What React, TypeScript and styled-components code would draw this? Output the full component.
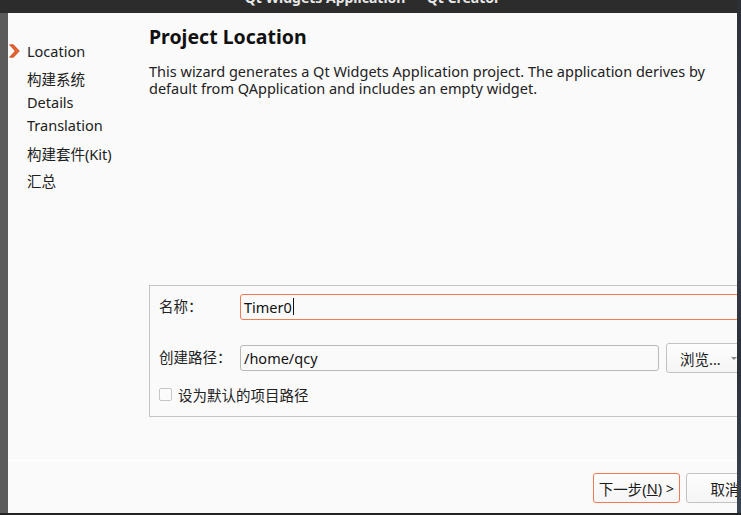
import React from "react";
import styled, { createGlobalStyle } from "styled-components";

const Global = createGlobalStyle`
  html, body { margin: 0; padding: 0; }
  body {
    width: 741px; height: 515px; overflow: hidden;
    background: #1e1f22;
    font-family: "Noto Sans", "Noto Sans CJK SC", sans-serif;
    font-size: 14.5px;
    color: #1a1a1a;
  }
`;

const Screen = styled.div`
  display: flex;
  flex-direction: column;
  width: 741px;
  height: 515px;
`;

const Upper = styled.div`
  display: flex;
  height: 513px;
`;

const MainCol = styled.div`
  width: 737px;
  display: flex;
  flex-direction: column;
`;

const TitleBar = styled.div`
  height: 13px;
  background: #2c2c2c;
  overflow: hidden;
  display: flex;
  justify-content: center;
  align-items: flex-start;
`;

const TitleText = styled.div`
  margin-top: -9px;
  margin-left: 8px;
  font-family: "Noto Sans", "DejaVu Sans", sans-serif;
  font-weight: 700;
  font-size: 14px;
  line-height: 14px;
  color: #e6e6e6;
  white-space: nowrap;
`;

const BodyRow = styled.div`
  flex: 1;
  display: flex;
  min-height: 0;
`;

const LeftStrip = styled.div`
  width: 8px;
  background: #5b5b5b;
`;

const RightStrip = styled.div`
  width: 4px;
  background: linear-gradient(180deg, #2b2f36 0%, #3a4350 40%, #2a3038 70%, #3b4552 100%);
`;

const BottomStrip = styled.div`
  height: 2px;
  background: #222;
`;

const Window = styled.div`
  width: 729px;
  background: #fafafa;
  display: flex;
  flex-direction: column;
  overflow: hidden;
`;

const Top = styled.div`
  height: 447px;
  display: flex;
`;

const Nav = styled.div`
  width: 141px;
  flex-shrink: 0;
  padding-top: 26px;
  display: flex;
  flex-direction: column;
`;

const NavItem = styled.div<{ $h: number }>`
  height: ${(p) => p.$h}px;
  display: flex;
  align-items: center;
  white-space: nowrap;
  color: #202020;
`;

const ArrowSlot = styled.div`
  width: 18px;
  padding-left: 1px;
  display: flex;
  align-items: center;
`;

const Content = styled.div`
  flex: 1;
  display: flex;
  flex-direction: column;
  padding-top: 11px;
  padding-bottom: 43px;
  min-width: 0;
`;

const Title = styled.div`
  font-weight: 700;
  font-size: 19.5px;
  line-height: 26px;
  color: #111;
`;

const Desc = styled.div`
  margin-top: 13px;
  line-height: 17px;
  color: #222;
  width: 565px;
`;

const Group = styled.div`
  margin-top: auto;
  width: 600px;
  box-sizing: border-box;
  border: 1px solid #c4c4c4;
  padding: 8px 9px 12px 9px;
  display: flex;
  flex-direction: column;
`;

const FormRow = styled.div<{ $h: number; $mt: number }>`
  display: grid;
  grid-template-columns: 81px 1fr;
  align-items: center;
  height: ${(p) => p.$h}px;
  margin-top: ${(p) => p.$mt}px;
`;

const Label = styled.div`
  color: #222;
  white-space: nowrap;
  line-height: 20px;
  padding-bottom: 2px;
`;

const Input = styled.div<{ $focus?: boolean }>`
  height: 26px;
  box-sizing: border-box;
  border: 1px solid ${(p) => (p.$focus ? "#f07a52" : "#b9b9b9")};
  border-radius: 3px;
  background: #fafafa;
  display: flex;
  align-items: center;
  padding: 0 0 1px 3px;
  color: #111;
`;

const Caret = styled.span`
  display: inline-block;
  width: 1px;
  height: 17px;
  background: #111;
  margin-left: 1px;
`;

const PathCell = styled.div`
  display: flex;
  align-items: center;
  gap: 7px;
`;

const PathInput = styled(Input)`
  width: 419px;
`;

const Button = styled.div<{ $focus?: boolean; $w: number }>`
  width: ${(p) => p.$w}px;
  height: 30px;
  box-sizing: border-box;
  flex-shrink: 0;
  border: 1px solid ${(p) => (p.$focus ? "#ef7a55" : "#c2c2c2")};
  border-radius: 3px;
  background: linear-gradient(180deg, #fdfdfd, #f5f5f5);
  display: flex;
  align-items: center;
  justify-content: center;
  color: #1a1a1a;
  white-space: nowrap;
`;

const BrowseButton = styled(Button)`
  justify-content: flex-start;
  padding-left: 13px;
  gap: 10px;
`;

const DropTri = styled.span`
  width: 0;
  height: 0;
  border-left: 3px solid transparent;
  border-right: 3px solid transparent;
  border-top: 3px solid #888;
`;

const CheckRow = styled.div`
  display: flex;
  align-items: center;
  gap: 6px;
  height: 20px;
  margin-top: 11px;
  color: #222;
`;

const CheckBox = styled.div`
  width: 13px;
  height: 13px;
  box-sizing: border-box;
  border: 1px solid #c6c6c6;
  border-radius: 2px;
  background: #fbfbfb;
`;

const Footer = styled.div`
  flex: 1;
  border-top: 1px solid #ffffff;
  display: flex;
  justify-content: flex-start;
  align-items: flex-start;
  padding: 12px 0 0 585px;
  gap: 6px;
`;

const Underline = styled.span`
  text-decoration: underline;
`;

const Chevron = () => (
  <svg width="11" height="14" viewBox="0 0 11 14">
    <path d="M0.6 0.8 L4.4 0.8 L10.3 7 L4.4 13.2 L0.6 13.2 L6.3 7 Z" fill="#e5622c" stroke="#c4461c" strokeWidth="0.8" strokeLinejoin="round" />
  </svg>
);

const navItems: { label: string; h: number; active?: boolean }[] = [
  { label: "Location", h: 24, active: true },
  { label: "构建系统", h: 30 },
  { label: "Details", h: 18 },
  { label: "Translation", h: 28 },
  { label: "构建套件(Kit)", h: 28 },
  { label: "汇总", h: 26 },
];

export default function App() {
  return (
    <>
      <Global />
      <Screen>
        <Upper>
          <MainCol>
            <TitleBar>
              <TitleText>Qt Widgets Application — Qt Creator</TitleText>
            </TitleBar>
            <BodyRow>
              <LeftStrip />
              <Window>
                <Top>
                  <Nav>
                    {navItems.map((it) => (
                      <NavItem key={it.label} $h={it.h}>
                        <ArrowSlot>{it.active ? <Chevron /> : null}</ArrowSlot>
                        {it.label}
                      </NavItem>
                    ))}
                  </Nav>
                  <Content>
                    <Title>Project Location</Title>
                    <Desc>
                      This wizard generates a Qt Widgets Application project. The application derives by default from QApplication and includes an empty widget.
                    </Desc>
                    <Group>
                      <FormRow $h={26} $mt={0}>
                        <Label>名称：</Label>
                        <Input $focus>
                          Timer0<Caret />
                        </Input>
                      </FormRow>
                      <FormRow $h={30} $mt={23}>
                        <Label>创建路径：</Label>
                        <PathCell>
                          <PathInput>/home/qcy</PathInput>
                          <BrowseButton $w={80}>
                            浏览...
                            <DropTri />
                          </BrowseButton>
                        </PathCell>
                      </FormRow>
                      <CheckRow>
                        <CheckBox />
                        设为默认的项目路径
                      </CheckRow>
                    </Group>
                  </Content>
                </Top>
                <Footer>
                  <Button $focus $w={87}>
                    下一步(<Underline>N</Underline>) &gt;
                  </Button>
                  <Button $w={78}>取消</Button>
                </Footer>
              </Window>
            </BodyRow>
          </MainCol>
          <RightStrip />
        </Upper>
        <BottomStrip />
      </Screen>
    </>
  );
}
